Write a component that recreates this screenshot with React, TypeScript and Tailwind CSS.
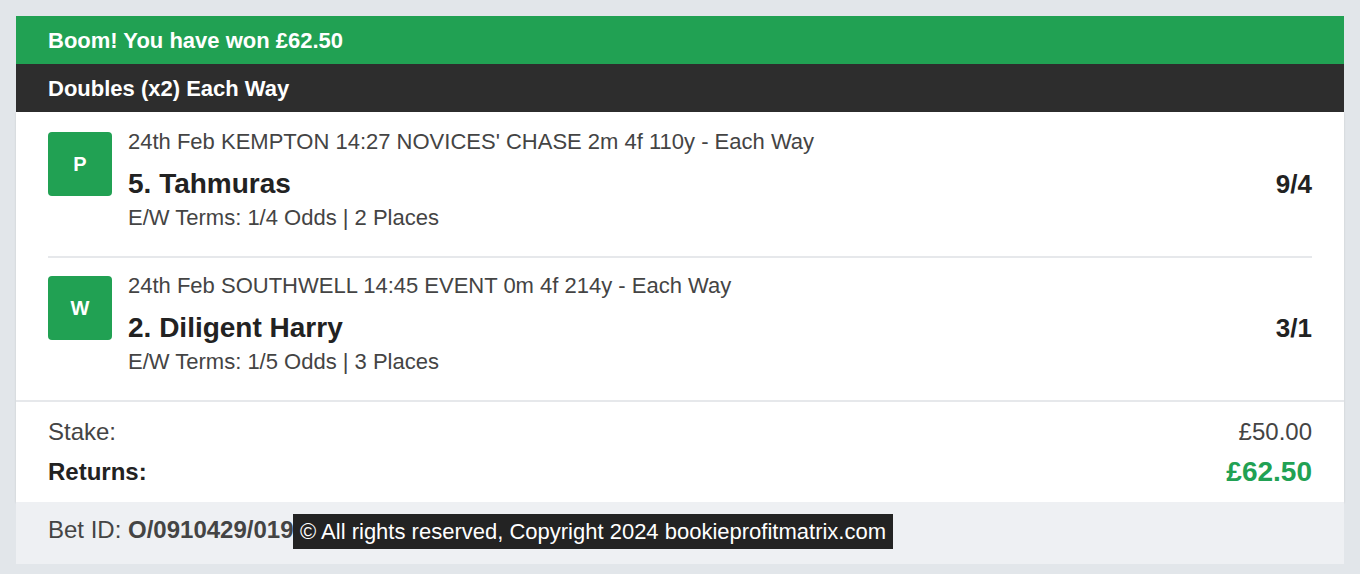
import { FC } from "react";

// Settled bet receipt: doubles each way, won

interface Leg {
  result: string;
  meta: string;
  runner: string;
  odds: string;
  terms: string;
}

const legs: Leg[] = [
  {
    result: "P",
    meta: "24th Feb KEMPTON 14:27 NOVICES' CHASE 2m 4f 110y - Each Way",
    runner: "5. Tahmuras",
    odds: "9/4",
    terms: "E/W Terms: 1/4 Odds | 2 Places",
  },
  {
    result: "W",
    meta: "24th Feb SOUTHWELL 14:45 EVENT 0m 4f 214y - Each Way",
    runner: "2. Diligent Harry",
    odds: "3/1",
    terms: "E/W Terms: 1/5 Odds | 3 Places",
  },
];

const LegRow: FC<{ leg: Leg; first: boolean; last: boolean }> = ({ leg, first, last }) => (
  <div
    className={`flex gap-4 pb-[25px] ${first ? "pt-[17px]" : "pt-[15px]"} ${
      last ? "" : "border-b-2 border-[#e6e8eb]"
    }`}
  >
    <div className="mt-[3px] flex h-16 w-16 shrink-0 items-center justify-center rounded bg-[#21a153] text-[20px] font-bold text-white">
      {leg.result}
    </div>
    <div className="flex-1">
      <p className="text-[22px] leading-[26px] text-[#444]">{leg.meta}</p>
      <div className="mt-[13px] flex items-center justify-between">
        <span className="text-[28px] font-bold leading-[32px] text-[#222]">{leg.runner}</span>
        <span className="text-[26px] font-bold leading-[32px] text-[#222]">{leg.odds}</span>
      </div>
      <p className="mt-[5px] text-[22px] leading-[26px] text-[#444]">{leg.terms}</p>
    </div>
  </div>
);

export default function App() {
  return (
    <div
      className="min-h-screen bg-[#e2e6ea] p-4"
      style={{ fontFamily: '"Liberation Sans", Arial, sans-serif' }}
    >
      <div className="relative">
        <div className="flex h-12 items-center bg-[#21a153] px-8 text-[22px] font-bold text-white">
          Boom! You have won £62.50
        </div>
        <div className="flex h-12 items-center bg-[#2d2d2d] px-8 text-[22px] font-bold text-white">
          Doubles (x2) Each Way
        </div>

        <div className="bg-white shadow-[0_1px_2px_rgba(0,0,0,0.12)]">
          <div className="border-b-2 border-[#e6e8eb] px-8">
            {legs.map((leg, i) => (
              <LegRow key={i} leg={leg} first={i === 0} last={i === legs.length - 1} />
            ))}
          </div>

          <div className="px-8 pt-4 pb-[14px]">
            <div className="flex items-center justify-between text-[24px] leading-[28px] text-[#444]">
              <span>Stake:</span>
              <span>£50.00</span>
            </div>
            <div className="mt-[10px] flex items-center justify-between leading-[32px]">
              <span className="text-[24px] font-bold text-[#222]">Returns:</span>
              <span className="text-[28px] font-bold text-[#21a153]">£62.50</span>
            </div>
          </div>
        </div>

        <div className="h-[62px] bg-[#eef0f3] px-8 pt-[14px] text-[24px] leading-[28px] text-[#444]">
          Bet ID: <span className="font-bold">O/0910429/01947</span>
        </div>

        {/* copyright watermark laid over the bet id */}
        <div className="absolute left-[277px] top-[498px] flex h-[35px] items-center bg-[#232323] px-[7px] text-[22px] text-white">
          © All rights reserved, Copyright 2024 bookieprofitmatrix.com
        </div>
      </div>
    </div>
  );
}
